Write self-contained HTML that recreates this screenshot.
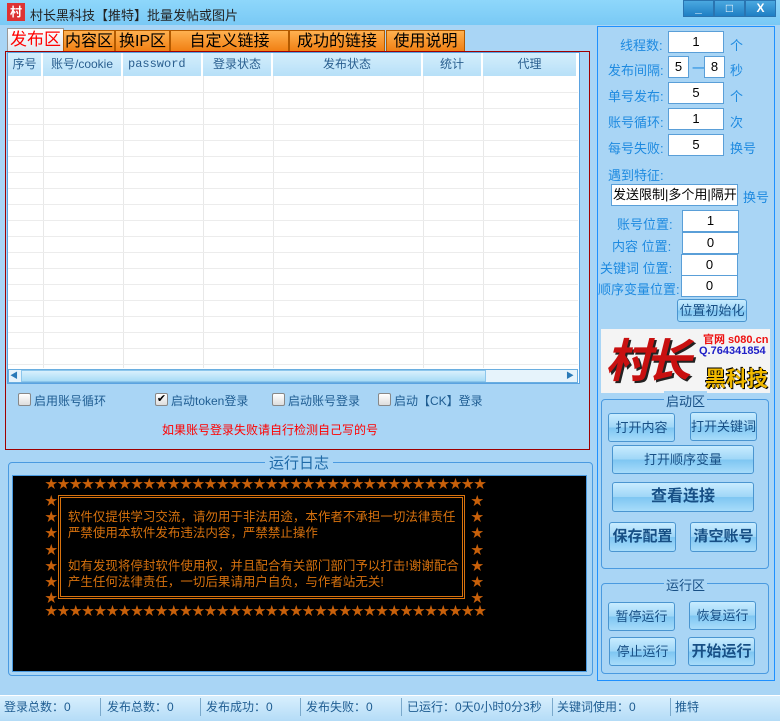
<!DOCTYPE html>
<html><head><meta charset="utf-8"><style>
*{margin:0;padding:0;box-sizing:border-box}
body{width:780px;height:721px;overflow:hidden;background:#a9d5f5;font-family:"Liberation Sans","Noto Sans CJK SC",sans-serif;font-size:12px;color:#1a5f9e;position:relative}
.a{position:absolute}
.title{left:0;top:0;width:780px;height:25px;background:linear-gradient(#8ed7fb,#79c9f5);}
.tb{top:0px;height:17px;width:31px;background:linear-gradient(#4aa8e0,#1f7fc4);border:1px solid #2a74b0;color:#fff;font-weight:bold;text-align:center;line-height:15px;font-size:12px}
.tab{top:30px;height:22px;background:linear-gradient(#ffb150,#f07d10);border:1px solid #b35a00;border-bottom:none;font-size:16px;color:#000;text-align:center;line-height:22px}
.hd{top:53px;height:23px;background:linear-gradient(#d4eefc,#b7e0f8);border-right:2px solid #fff;text-align:center;line-height:23px;color:#2a5f8f;font-size:12px}
.vl{top:76px;height:292px;width:1px;background:#e8e8e8}
.hl{left:8px;width:570px;height:1px;background:#ececec}
.cb{width:13px;height:13px;border:1px solid #888;background:linear-gradient(#fff,#ddd);border-radius:2px;font-size:11px;line-height:11px;text-align:center;color:#000}
.lab{font-size:13px;color:#1e8ae0}
.inp{background:#fff;border:1px solid #5a9fd8;text-align:center;font-size:13px;color:#000;height:22px;line-height:20px}
.btn{background:linear-gradient(#c8ecff 0%,#9ed6f7 50%,#7ec6f2 51%,#a8dcfa 100%);border:1px solid #4a95d0;border-radius:3px;text-align:center;color:#174f85;font-size:13px}
.grp{border:1px solid #4a9ae0;border-radius:4px}
.log{color:#d8720e;font-size:12.5px;white-space:pre;line-height:16px}
.sep{top:698px;width:1px;height:18px;background:#7aa9cc}
</style></head><body>
<div class="a title"></div>
<div class="a" style="left:7px;top:3px;width:18px;height:18px;background:#d33;color:#fff;font-size:12px;text-align:center;line-height:18px;font-weight:bold">村</div>
<div class="a" style="left:30px;top:5px;font-size:13px;color:#222">村长黑科技【推特】批量发帖或图片</div>
<div class="a tb" style="left:683px">_</div>
<div class="a tb" style="left:714px">□</div>
<div class="a tb" style="left:745px">X</div>

<div class="a tab" style="left:7px;top:28px;height:24px;width:57px;background:linear-gradient(#fff,#dfe8ef);color:#f00;font-size:17px;border-color:#999">发布区</div>
<div class="a tab" style="left:63px;width:52px">内容区</div>
<div class="a tab" style="left:115px;width:55px">换IP区</div>
<div class="a tab" style="left:170px;width:119px">自定义链接</div>
<div class="a tab" style="left:289px;width:96px">成功的链接</div>
<div class="a tab" style="left:386px;width:79px">使用说明</div>

<div class="a" style="left:5px;top:51px;width:585px;height:399px;border:1px solid #a00000"></div>
<div class="a" style="left:7px;top:52px;width:573px;height:332px;background:#fff;border:1px solid #5aa2e0"></div>
<div class="a hd" style="left:8px;width:35px">序号</div>
<div class="a hd" style="left:43px;width:80px">账号/cookie</div>
<div class="a hd" style="left:123px;width:80px;text-align:left;padding-left:5px;font-family:'Liberation Mono',monospace">password</div>
<div class="a hd" style="left:203px;width:70px">登录状态</div>
<div class="a hd" style="left:273px;width:150px">发布状态</div>
<div class="a hd" style="left:423px;width:60px">统计</div>
<div class="a hd" style="left:483px;width:95px">代理</div>
<div class="a vl" style="left:43px"></div><div class="a vl" style="left:123px"></div><div class="a vl" style="left:203px"></div><div class="a vl" style="left:273px"></div><div class="a vl" style="left:423px"></div><div class="a vl" style="left:483px"></div>
<div class="a hl" style="top:92px"></div><div class="a hl" style="top:108px"></div><div class="a hl" style="top:124px"></div><div class="a hl" style="top:140px"></div><div class="a hl" style="top:156px"></div><div class="a hl" style="top:172px"></div><div class="a hl" style="top:188px"></div><div class="a hl" style="top:204px"></div><div class="a hl" style="top:220px"></div><div class="a hl" style="top:236px"></div><div class="a hl" style="top:252px"></div><div class="a hl" style="top:268px"></div><div class="a hl" style="top:284px"></div><div class="a hl" style="top:300px"></div><div class="a hl" style="top:316px"></div><div class="a hl" style="top:332px"></div><div class="a hl" style="top:348px"></div><div class="a hl" style="top:364px"></div>
<div class="a" style="left:8px;top:369px;width:570px;height:14px;background:#e6f3fb;border:1px solid #6aaee0"></div>
<div class="a" style="left:21px;top:370px;width:465px;height:12px;background:linear-gradient(#d8f0fd,#a9dcf6);border:1px solid #8cc6ec"></div>
<div class="a" style="left:10px;top:370px;font-size:8px;color:#2a7ab8">◀</div>
<div class="a" style="left:566px;top:370px;font-size:8px;color:#2a7ab8">▶</div>

<div class="a cb" style="left:18px;top:393px"></div><div class="a" style="left:34px;top:392px;color:#1f5d92">启用账号循环</div>
<div class="a cb" style="left:155px;top:393px">✔</div><div class="a" style="left:171px;top:392px;color:#1f5d92">启动token登录</div>
<div class="a cb" style="left:272px;top:393px"></div><div class="a" style="left:288px;top:392px;color:#1f5d92">启动账号登录</div>
<div class="a cb" style="left:378px;top:393px"></div><div class="a" style="left:394px;top:392px;color:#1f5d92">启动【CK】登录</div>
<div class="a" style="left:162px;top:421px;color:#f00;font-size:12px">如果账号登录失败请自行检测自己写的号</div>

<div class="a grp" style="left:8px;top:462px;width:585px;height:214px"></div>
<div class="a" style="left:265px;top:452px;background:#a9d5f5;padding:0 4px;font-size:15px;color:#1f6aa8">运行日志</div>
<div class="a" style="left:12px;top:475px;width:575px;height:197px;background:#000;border:1px solid #4a9ae0"></div>
<div class="a log" style="left:45px;top:476px;color:#c8600a;letter-spacing:-0.25px">★★★★★★★★★★★★★★★★★★★★★★★★★★★★★★★★★★★★</div>
<div class="a log" style="left:45px;top:603px;color:#c8600a;letter-spacing:-0.25px">★★★★★★★★★★★★★★★★★★★★★★★★★★★★★★★★★★★★</div>
<div class="a" style="left:58px;top:495px;width:407px;height:104px;border:3px double #d8720e"></div>
<div class="a log" style="left:45px;top:493px;line-height:16.2px"><span style="color:#c8600a">★</span>
<span style="color:#c8600a">★</span>   软件仅提供学习交流，请勿用于非法用途，本作者不承担一切法律责任
<span style="color:#c8600a">★</span>   严禁使用本软件发布违法内容，严禁禁止操作
<span style="color:#c8600a">★</span>
<span style="color:#c8600a">★</span>   如有发现将停封软件使用权，并且配合有关部门部门予以打击!谢谢配合
<span style="color:#c8600a">★</span>   产生任何法律责任，一切后果请用户自负，与作者站无关!
<span style="color:#c8600a">★</span></div>
<div class="a log" style="left:471px;top:493px;line-height:16.2px;color:#c8600a">★
★
★
★
★
★
★</div>

<div class="a" style="left:597px;top:26px;width:178px;height:655px;border:1px solid #1e90ff"></div>
<div class="a lab" style="left:620px;top:35px">线程数:</div><div class="a inp" style="left:668px;top:31px;width:56px">1</div><div class="a lab" style="left:730px;top:35px">个</div>
<div class="a lab" style="left:608px;top:60px">发布间隔:</div><div class="a inp" style="left:668px;top:56px;width:21px">5</div><div class="a lab" style="left:692px;top:58px">一</div><div class="a inp" style="left:704px;top:56px;width:21px">8</div><div class="a lab" style="left:730px;top:60px">秒</div>
<div class="a lab" style="left:608px;top:86px">单号发布:</div><div class="a inp" style="left:668px;top:82px;width:56px">5</div><div class="a lab" style="left:730px;top:86px">个</div>
<div class="a lab" style="left:608px;top:112px">账号循环:</div><div class="a inp" style="left:668px;top:108px;width:56px">1</div><div class="a lab" style="left:730px;top:112px">次</div>
<div class="a lab" style="left:608px;top:138px">每号失败:</div><div class="a inp" style="left:668px;top:134px;width:56px">5</div><div class="a lab" style="left:730px;top:138px">换号</div>
<div class="a lab" style="left:608px;top:165px">遇到特征:</div>
<div class="a inp" style="left:611px;top:184px;width:127px;text-align:left;padding-left:1px;white-space:nowrap;overflow:hidden">发送限制|多个用|隔开</div><div class="a lab" style="left:743px;top:187px">换号</div>
<div class="a lab" style="left:617px;top:214px">账号位置:</div><div class="a inp" style="left:682px;top:210px;width:57px">1</div>
<div class="a lab" style="left:612px;top:236px">内容 位置:</div><div class="a inp" style="left:682px;top:232px;width:57px">0</div>
<div class="a lab" style="left:600px;top:258px">关键词 位置:</div><div class="a inp" style="left:681px;top:254px;width:57px">0</div>
<div class="a lab" style="left:598px;top:279px">顺序变量位置:</div><div class="a inp" style="left:681px;top:275px;width:57px">0</div>
<div class="a btn" style="left:677px;top:299px;width:70px;height:23px;line-height:21px">位置初始化</div>
<div class="a" style="left:601px;top:329px;width:169px;height:64px;background:#f4f4f4;overflow:hidden">
<div class="a" style="left:4px;top:2px;font-size:46px;font-weight:bold;color:#c81010;line-height:60px;font-style:italic;letter-spacing:-6px;text-shadow:2px 2px 0 #222">村长</div>
<div class="a" style="left:102px;top:2px;font-size:11px;font-weight:bold;color:#e11;white-space:nowrap">官网 s080.cn</div>
<div class="a" style="left:98px;top:16px;font-size:11px;font-weight:bold;color:#2020c8;white-space:nowrap">Q.764341854</div>
<div class="a" style="left:104px;top:34px;font-size:21px;font-weight:bold;color:#f0b800;text-shadow:1px 1px 0 #000,-1px -1px 0 #000">黑科技</div>
</div>
<div class="a grp" style="left:601px;top:399px;width:168px;height:170px"></div>
<div class="a" style="left:664px;top:391px;background:#a9d5f5;padding:0 2px;font-size:13px;color:#174f85">启动区</div>
<div class="a btn" style="left:608px;top:413px;width:67px;height:29px;line-height:27px">打开内容</div>
<div class="a btn" style="left:690px;top:412px;width:67px;height:29px;line-height:27px">打开关键词</div>
<div class="a btn" style="left:612px;top:445px;width:142px;height:29px;line-height:27px">打开顺序变量</div>
<div class="a btn" style="left:612px;top:482px;width:142px;height:30px;line-height:28px;font-size:16px;font-weight:bold">查看连接</div>
<div class="a btn" style="left:609px;top:522px;width:67px;height:30px;line-height:28px;font-size:15px;font-weight:bold">保存配置</div>
<div class="a btn" style="left:690px;top:522px;width:67px;height:30px;line-height:28px;font-size:15px;font-weight:bold">清空账号</div>
<div class="a grp" style="left:601px;top:583px;width:168px;height:91px"></div>
<div class="a" style="left:664px;top:575px;background:#a9d5f5;padding:0 2px;font-size:13px;color:#174f85">运行区</div>
<div class="a btn" style="left:608px;top:602px;width:67px;height:29px;line-height:27px">暂停运行</div>
<div class="a btn" style="left:689px;top:601px;width:67px;height:29px;line-height:27px">恢复运行</div>
<div class="a btn" style="left:609px;top:637px;width:67px;height:29px;line-height:27px">停止运行</div>
<div class="a btn" style="left:688px;top:637px;width:67px;height:29px;line-height:27px;font-size:15px;font-weight:bold">开始运行</div>

<div class="a" style="left:0;top:695px;width:780px;height:26px;background:linear-gradient(#d8effd,#b4dcf7);border-top:1px solid #fff"></div>
<div class="a" style="left:0;top:696px;width:780px;height:22px;line-height:22px;font-size:12px;color:#1f5d92;white-space:nowrap">
<span class="a" style="left:4px">登录总数：0</span>
<span class="a" style="left:107px">发布总数：0</span>
<span class="a" style="left:206px">发布成功：0</span>
<span class="a" style="left:306px">发布失败：0</span>
<span class="a" style="left:407px">已运行：0天0小时0分3秒</span>
<span class="a" style="left:557px">关键词使用：0</span>
<span class="a" style="left:675px">推特</span>
</div>
<div class="a sep" style="left:100px"></div>
<div class="a sep" style="left:200px"></div>
<div class="a sep" style="left:300px"></div>
<div class="a sep" style="left:401px"></div>
<div class="a sep" style="left:552px"></div>
<div class="a sep" style="left:670px"></div>
</body></html>
